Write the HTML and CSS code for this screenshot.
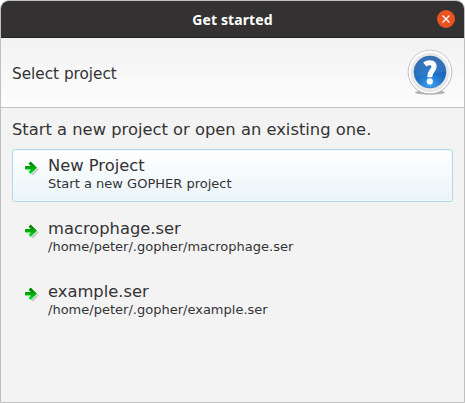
FILE: index.html
```html
<!DOCTYPE html>
<html lang="en">
<head>
<meta charset="utf-8">
<title>Get started</title>
<link rel="stylesheet" href="styles.css">
</head>
<body>
<svg class="defs" width="0" height="0" aria-hidden="true">
  <defs>
    <linearGradient id="green" x1="0" y1="0" x2="0" y2="1">
      <stop offset="0" stop-color="#007a00"/><stop offset=".5" stop-color="#00a80c"/><stop offset="1" stop-color="#00f030"/>
    </linearGradient>
    <filter id="soft" x="-30%" y="-30%" width="160%" height="160%"><feGaussianBlur stdDeviation=".7"/></filter>
    <symbol id="arrow" viewBox="0 0 16 16">
      <path d="M3 8h5L6.500 5l2.500-1 6 5L9 15.500l-2.500-2L8 11H3z" fill="#999" opacity=".5" filter="url(#soft)"/>
      <path d="M.3 5.200h4.500L3.300 3.300 6.500.8l7.600 6.900-7.600 6.900-3.200-2.700 1.500-1.700h-4.500z" fill="#fff"/>
      <path d="M1 6h5.700L4.500 3.700 6.700 1.600 13 7.800 6.700 14 4.500 11.900 6.700 9.500H1z" fill="url(#green)"/>
    </symbol>
  </defs>
</svg>
<div class="window">
  <header class="titlebar">
    <span class="title">Get started</span>
    <button class="close" aria-label="Close">
      <svg width="18" height="18" viewBox="0 0 18 18"><path d="M5.500 5.500l7 7M12.500 5.500l-7 7" stroke="#fff" stroke-width="1.300"/></svg>
    </button>
  </header>
  <section class="header">
    <h1>Select project</h1>
    <svg class="help" width="48" height="48" viewBox="0 0 48 48">
      <defs>
        <linearGradient id="rim" x1="0" y1="0" x2="0" y2="1"><stop offset="0" stop-color="#fff"/><stop offset="1" stop-color="#dcdcdc"/></linearGradient>
        <linearGradient id="edge" x1="0" y1="0" x2="0" y2="1"><stop offset="0" stop-color="#c8c8c8"/><stop offset="1" stop-color="#b4b4b4"/></linearGradient>
        <radialGradient id="blue" cx=".5" cy=".95" r=".9"><stop offset="0" stop-color="#3ba4f4"/><stop offset=".5" stop-color="#1c70c6"/><stop offset="1" stop-color="#0b50a2"/></radialGradient>
        <linearGradient id="shine" x1="0" y1="0" x2="0" y2="1"><stop offset="0" stop-color="#fff" stop-opacity=".2"/><stop offset="1" stop-color="#fff" stop-opacity=".04"/></linearGradient>
      </defs>
      <ellipse cx="24" cy="43.500" rx="15" ry="2.200" fill="#777" opacity=".55" filter="url(#soft)"/>
      <circle cx="24" cy="23" r="21.900" fill="url(#rim)" stroke="url(#edge)" stroke-width="1"/>
      <circle cx="24" cy="23" r="20.500" fill="none" stroke="#fff" stroke-width="1.500"/>
      <circle cx="24" cy="23" r="19" fill="#e6e7e9"/>
      <circle cx="24" cy="23" r="16" fill="url(#blue)" stroke="#2e69aa" stroke-width=".6"/>
      <path d="M8.500 23a15.500 15.500 0 0 1 31 0Q24 23 8.500 29z" fill="url(#shine)"/>
      <path d="M18.800 15.400C21 13.600 28 12.200 28 17.400C28 22 23.800 21.500 23.800 28.300" fill="none" stroke="#fff" stroke-width="5.200"/>
      <circle cx="23.800" cy="32.400" r="3.100" fill="#fff"/>
    </svg>
  </section>
  <main class="content">
    <p class="prompt">Start a new project or open an existing one.</p>
    <div class="links">
      <button class="link active">
        <svg class="arrow"><use href="#arrow"/></svg>
        <span class="text"><span class="name">New Project</span><span class="detail">Start a new GOPHER project</span></span>
      </button>
      <button class="link">
        <svg class="arrow"><use href="#arrow"/></svg>
        <span class="text"><span class="name">macrophage.ser</span><span class="detail">/home/peter/.gopher/macrophage.ser</span></span>
      </button>
      <button class="link">
        <svg class="arrow"><use href="#arrow"/></svg>
        <span class="text"><span class="name">example.ser</span><span class="detail">/home/peter/.gopher/example.ser</span></span>
      </button>
    </div>
  </main>
</div>
</body>
</html>
```
FILE: styles.css
```css
* { box-sizing: border-box; }
body { margin: 0; background: #fff; color: #333; font-family: "DejaVu Sans", sans-serif; }
button { font: inherit; color: inherit; padding: 0; border: 0; background: none; }
.defs { position: absolute; }
.window {
  width: 465px; height: 403px; overflow: hidden;
  border: 1px solid #c0c0c0; border-radius: 9px 9px 0 0;
  background: #f3f3f3;
}
.titlebar {
  display: grid; grid-template-columns: 1fr auto 1fr; align-items: center;
  height: 37px; padding: 0 9px;
  background: #333131; border-bottom: 1px solid #232222;
  color: #fff;
}
.title { grid-column: 2; padding-top: 1px; font: bold 14px/20px "Noto Sans", sans-serif; letter-spacing: .1px; white-space: nowrap; }
.close { justify-self: end; width: 18px; height: 18px; border-radius: 50%; background: #e95420; }
.close svg { display: block; }
.header {
  display: flex; align-items: center; justify-content: space-between;
  height: 70px; padding: 0 10px 0 11px;
  background: linear-gradient(#f2f2f2, #fdfdfd);
  border-bottom: 1px solid #c4c4c4;
}
h1 { margin: 2px 0 0; font-size: 15.250px; font-weight: normal; line-height: 18px; }
.content { padding: 11px; }
.prompt { margin: 0 0 9px; font-size: 16.340px; line-height: 21px; white-space: nowrap; }
.links { display: flex; flex-direction: column; gap: 10px; }
.link {
  display: flex; align-items: flex-start; height: 53px; padding: 6px 11px;
  border: 1px solid transparent; border-radius: 3px; text-align: left;
}
.active { border-color: #b0d8ea; background: linear-gradient(#fff, #eaf4f9); box-shadow: inset 0 0 0 1px #f4fbff; }
.arrow { width: 16px; height: 16px; margin: 4px 8px 0 0; }
.text { display: flex; flex-direction: column; white-space: nowrap; }
.name { font-size: 16.340px; line-height: 19px; }
.detail { font-size: 13.030px; line-height: 17px; }
```
